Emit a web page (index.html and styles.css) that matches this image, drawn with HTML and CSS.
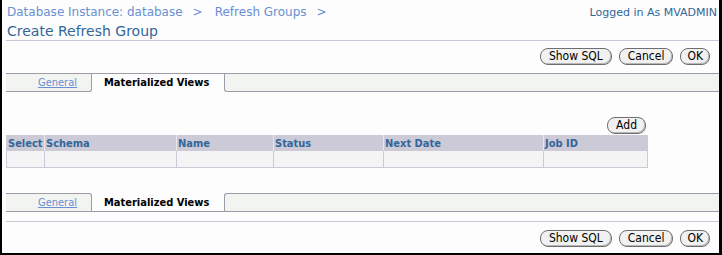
FILE: index.html
```html
<!DOCTYPE html>
<html>
<head>
<meta charset="utf-8">
<link rel="stylesheet" href="styles.css">
</head>
<body>
<div class="frame">
  <div class="top">
    <div class="crumbs">
      <a class="crumb">Database Instance: database</a><span class="sep">&gt;</span><a class="crumb">Refresh Groups</a><span class="sep">&gt;</span>
    </div>
    <div class="user">Logged in As MVADMIN</div>
  </div>
  <h1 class="title">Create Refresh Group</h1>
  <div class="actions">
    <button class="btn">Show SQL</button>
    <button class="btn">Cancel</button>
    <button class="btn btn-ok">OK</button>
  </div>
  <div class="tabs tabs-top">
    <div class="tab tab-general"><a class="tab-link">General</a></div>
    <div class="tab tab-sel">Materialized Views</div>
    <div class="tab tab-rest"></div>
  </div>
  <div class="content">
    <div class="add-row"><button class="btn">Add</button></div>
    <table class="grid">
      <thead>
        <tr>
          <th class="c-select">Select</th>
          <th class="c-schema">Schema</th>
          <th class="c-name">Name</th>
          <th class="c-status">Status</th>
          <th class="c-next">Next Date</th>
          <th class="c-job">Job ID</th>
        </tr>
      </thead>
      <tbody>
        <tr><td></td><td></td><td></td><td></td><td></td><td></td></tr>
      </tbody>
    </table>
  </div>
  <div class="tabs tabs-bottom">
    <div class="tab tab-general"><a class="tab-link">General</a></div>
    <div class="tab tab-sel">Materialized Views</div>
    <div class="tab tab-rest"></div>
  </div>
  <div class="rule"></div>
  <div class="actions actions-bottom">
    <button class="btn">Show SQL</button>
    <button class="btn">Cancel</button>
    <button class="btn btn-ok">OK</button>
  </div>
</div>
</body>
</html>
```

FILE: styles.css
```css
* { box-sizing: border-box; }
html, body { margin: 0; padding: 0; }
body {
  background: #fcfdfc;
  font-family: "DejaVu Sans", Tahoma, sans-serif;
}
.frame {
  width: 722px;
  height: 255px;
  border-left: 2px solid #000;
  border-right: 3px solid #000;
  border-bottom: 2px solid #000;
  padding-left: 4px;
  background: #fcfdfc;
  display: flex;
  flex-direction: column;
}
.top {
  height: 19px;
  padding-top: 5px;
  display: flex;
  justify-content: space-between;
  align-items: flex-start;
}
.crumbs {
  padding-left: 1px;
  font-size: 12px;
  line-height: 15px;
  color: #6a8fd2;
}
.crumb { color: #6a8fd2; text-decoration: none; }
.sep { margin: 0 12px 0 10px; }
.user {
  font-size: 11px;
  line-height: 14px;
  color: #336699;
  padding-top: 1px;
  padding-right: 2px;
}
.title {
  margin: 0;
  height: 22px;
  padding-top: 3px;
  padding-left: 1px;
  font-size: 14px;
  font-weight: normal;
  line-height: 18px;
  color: #336699;
  border-bottom: 1px solid #c8c8d6;
}
.actions {
  margin-top: 7px;
  display: flex;
  justify-content: flex-end;
  gap: 7px;
  padding-right: 9px;
}
.btn {
  height: 17px;
  margin: 0;
  padding: 0 8px;
  font-family: "DejaVu Sans Condensed", "DejaVu Sans", sans-serif;
  font-stretch: condensed;
  font-size: 12px;
  line-height: 15px;
  color: #000;
  background: #f1f1f1;
  border: 1px solid #6e6e6e;
  border-radius: 8px;
  box-shadow: inset -1px -1px 0 #b8b8b8;
}
.btn-ok { padding: 0 6px; }
.tabs {
  display: flex;
  height: 19px;
  font-family: "DejaVu Sans Condensed", "DejaVu Sans", sans-serif;
  font-stretch: condensed;
  font-size: 11px;
  line-height: 17px;
}
.tabs-top { margin-top: 8px; border-top: 1px solid #9c9ca8; }
.tab { height: 100%; }
.tab-general {
  width: 86px;
  background: #f2f4f2;
  text-align: right;
  padding-right: 14px;
}
.tab-link { color: #6a8fd2; text-decoration: underline; }
.tab-sel {
  width: 132px;
  padding-left: 12px;
  font-weight: bold;
  color: #000;
  background: #fcfdfc;
}
.tab-rest { flex: 1; background: #f2f4f2; }
.tabs-top .tab-general {
  border-right: 1px solid #9c9ca8;
  border-bottom: 1px solid #9c9ca8;
  border-bottom-right-radius: 3px;
}
.tabs-top .tab-rest {
  border-left: 1px solid #9c9ca8;
  border-bottom: 1px solid #9c9ca8;
  border-bottom-left-radius: 3px;
}
.tabs-bottom { margin-top: 25px; border-bottom: 1px solid #9c9ca8; }
.tabs-bottom .tab-general {
  border-right: 1px solid #9c9ca8;
  border-top: 1px solid #9c9ca8;
  border-top-right-radius: 3px;
}
.tabs-bottom .tab-rest {
  border-left: 1px solid #9c9ca8;
  border-top: 1px solid #9c9ca8;
  border-top-left-radius: 3px;
}
.tabs-bottom .tab-sel { padding-top: 1px; }
.content { width: 641px; margin-top: 25px; }
.add-row { display: flex; justify-content: flex-end; padding-right: 1px; }
.grid {
  margin-top: 1px;
  width: 641px;
  border-collapse: collapse;
  table-layout: fixed;
  font-family: "DejaVu Sans Condensed", "DejaVu Sans", sans-serif;
  font-stretch: condensed;
  font-size: 11px;
}
.grid th {
  height: 16px;
  padding: 0 0 0 1px;
  text-align: left;
  font-weight: bold;
  color: #336699;
  background: #cbcad6;
  border-left: 1px solid #e6e6ec;
  line-height: 15px;
  white-space: nowrap;
  overflow: hidden;
}
.grid th:first-child { border-left: 1px solid #cbcad6; }
.grid td {
  height: 16px;
  padding: 0;
  background: #f3f4f3;
  border: 1px solid #cbcad6;
  border-top: none;
}
.c-select { width: 38px; }
.c-schema { width: 132px; }
.c-name { width: 97px; }
.c-status { width: 110px; }
.c-next { width: 160px; }
.c-job { width: 104px; }
.rule { margin-top: 9px; border-top: 1px solid #c8c8d6; }
.actions-bottom { margin-top: 8px; }
```
